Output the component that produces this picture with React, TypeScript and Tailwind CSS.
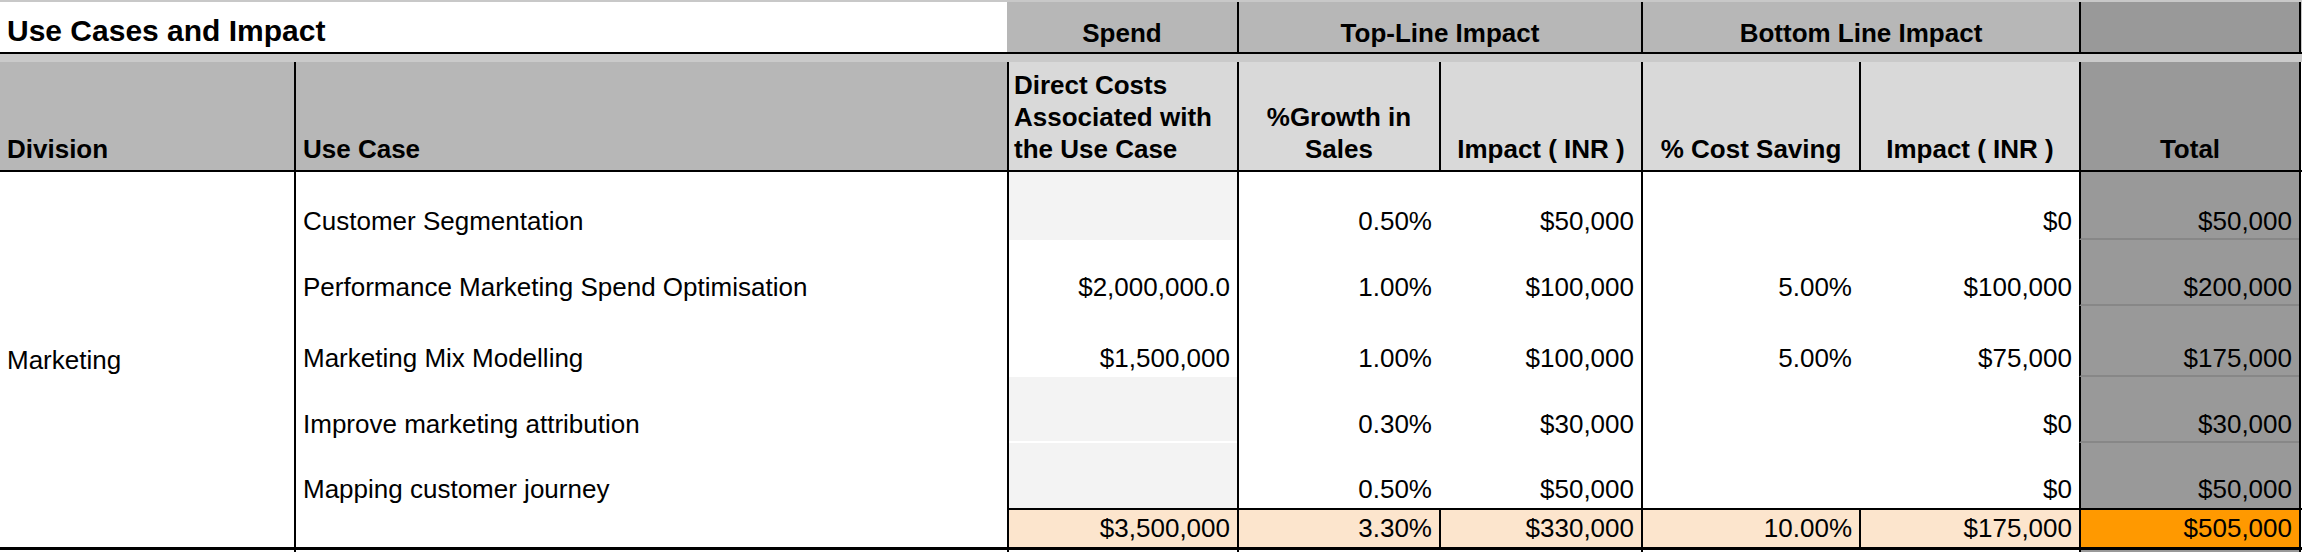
import React from 'react';

type Row = {
  useCase: string;
  height: string;
  spend: string;
  spendShaded: boolean;
  growth: string;
  topImpact: string;
  saving: string;
  bottomImpact: string;
  total: string;
  gapBelow?: boolean;
  lastRow?: boolean;
};

const ROWS: Row[] = [
  { useCase: 'Customer Segmentation', height: 'h-[68px]', spend: '', spendShaded: true, growth: '0.50%', topImpact: '$50,000', saving: '', bottomImpact: '$0', total: '$50,000' },
  { useCase: 'Performance Marketing Spend Optimisation', height: 'h-[66px]', spend: '$2,000,000.0', spendShaded: false, growth: '1.00%', topImpact: '$100,000', saving: '5.00%', bottomImpact: '$100,000', total: '$200,000' },
  { useCase: 'Marketing Mix Modelling', height: 'h-[71px]', spend: '$1,500,000', spendShaded: false, growth: '1.00%', topImpact: '$100,000', saving: '5.00%', bottomImpact: '$75,000', total: '$175,000' },
  { useCase: 'Improve marketing attribution', height: 'h-[66px]', spend: '', spendShaded: true, growth: '0.30%', topImpact: '$30,000', saving: '', bottomImpact: '$0', total: '$30,000', gapBelow: true },
  { useCase: 'Mapping customer journey', height: 'h-[65px]', spend: '', spendShaded: true, growth: '0.50%', topImpact: '$50,000', saving: '', bottomImpact: '$0', total: '$50,000', lastRow: true },
];

const num = 'flex items-end justify-end pr-[7px] pb-[3px]';

export default function App() {
  return (
    <div className="w-[2302px] h-[552px] overflow-hidden bg-white text-black text-[26px] leading-[32px] [font-family:'Liberation_Sans',Arial,sans-serif]">
      <div className="h-[2px] bg-[#c8c8c8]" />

      {/* Title row */}
      <div className="flex h-[50px] font-bold">
        <div className="w-[1007px] flex items-end pl-[7px] pb-[4px] text-[30px] leading-[34px]">Use Cases and Impact</div>
        <div className="w-[230px] bg-[#b7b7b7] flex items-end justify-center pb-[3px]">Spend</div>
        <div className="w-[404px] bg-[#b7b7b7] border-l-2 border-black flex items-end justify-center pb-[3px]">Top-Line Impact</div>
        <div className="w-[438px] bg-[#b7b7b7] border-l-2 border-black flex items-end justify-center pb-[3px]">Bottom Line Impact</div>
        <div className="w-[220px] bg-[#999999] border-l-2 border-black" />
        <div className="w-[3px] border-l-2 border-black bg-[#c8c8c8]" />
      </div>
      <div className="h-[2px] bg-black" />
      <div className="h-[8px] bg-[#cacaca]" />

      {/* Column headers */}
      <div className="flex h-[108px] font-bold">
        <div className="w-[294px] bg-[#b7b7b7] flex items-end pl-[7px] pb-[5px]">Division</div>
        <div className="w-[713px] bg-[#b7b7b7] border-l-2 border-black flex items-end pl-[7px] pb-[5px]">Use Case</div>
        <div className="w-[230px] bg-[#d9d9d9] border-l-2 border-black flex items-end pl-[5px] pb-[5px]">
          <span>Direct Costs<br />Associated with<br />the Use Case</span>
        </div>
        <div className="w-[202px] bg-[#d9d9d9] border-l-2 border-black flex items-end justify-center text-center pb-[5px]">
          <span>%Growth in<br />Sales</span>
        </div>
        <div className="w-[202px] bg-[#d9d9d9] border-l-2 border-black flex items-end justify-center pb-[5px]">Impact ( INR )</div>
        <div className="w-[218px] bg-[#d9d9d9] border-l-2 border-black flex items-end justify-center pb-[5px]">% Cost Saving</div>
        <div className="w-[220px] bg-[#d9d9d9] border-l-2 border-black flex items-end justify-center pb-[5px]">Impact ( INR )</div>
        <div className="w-[220px] bg-[#999999] border-l-2 border-black flex items-end justify-center pb-[5px]">Total</div>
        <div className="w-[3px] border-l-2 border-black" />
      </div>
      <div className="h-[2px] bg-black" />

      {/* Body */}
      <div className="flex h-[375px]">
        <div className="w-[294px] flex items-center pl-[7px]">Marketing</div>
        <div className="w-[713px] border-l-2 border-black flex flex-col">
          {ROWS.map(r => (
            <div key={r.useCase} className={`${r.height} flex items-end pl-[7px] pb-[3px]`}>{r.useCase}</div>
          ))}
        </div>
        <div className="w-[1295px] flex flex-col">
          {ROWS.map(r => (
            <div key={r.useCase} className={`${r.height} flex`}>
              <div className="w-[230px] border-l-2 border-black flex flex-col">
                <div className={`flex-1 ${num} ${r.spendShaded ? 'bg-[#f3f3f3]' : ''} ${r.gapBelow ? 'mb-[2px]' : ''}`}>{r.spend}</div>
              </div>
              <div className={`w-[202px] border-l-2 border-black ${num}`}>{r.growth}</div>
              <div className={`w-[202px] ${num}`}>{r.topImpact}</div>
              <div className={`w-[218px] border-l-2 border-black ${num}`}>{r.saving}</div>
              <div className={`w-[220px] ${num}`}>{r.bottomImpact}</div>
              <div className={`w-[220px] bg-[#999999] border-l-2 border-black flex items-end justify-end pr-[7px] ${r.lastRow ? 'pb-[3px]' : 'pb-[1px] border-b-2 border-b-[#878787]'}`}>{r.total}</div>
              <div className="w-[3px] border-l-2 border-black" />
            </div>
          ))}
          <div className="h-[2px] bg-black" />
          <div className="h-[37px] flex bg-[#fce5cd]">
            <div className={`w-[230px] border-l-2 border-black ${num}`}>$3,500,000</div>
            <div className={`w-[202px] border-l-2 border-black ${num}`}>3.30%</div>
            <div className={`w-[202px] border-l-2 border-black ${num}`}>$330,000</div>
            <div className={`w-[218px] border-l-2 border-black ${num}`}>10.00%</div>
            <div className={`w-[220px] border-l-2 border-black ${num}`}>$175,000</div>
            <div className={`w-[220px] bg-[#ff9900] border-l-2 border-black ${num}`}>$505,000</div>
            <div className="w-[3px] border-l-2 border-black bg-white" />
          </div>
        </div>
      </div>
      <div className="h-[3px] bg-black" />

      {/* Next row start */}
      <div className="flex h-[5px]">
        <div className="w-[294px]" />
        <div className="w-[713px] border-l-2 border-black" />
        <div className="w-[230px] border-l-2 border-black" />
        <div className="w-[404px] border-l-2 border-black" />
        <div className="w-[438px] border-l-2 border-black" />
        <div className="w-[220px] bg-[#999999] border-l-2 border-black" />
        <div className="w-[3px] border-l-2 border-black" />
      </div>
    </div>
  );
}
